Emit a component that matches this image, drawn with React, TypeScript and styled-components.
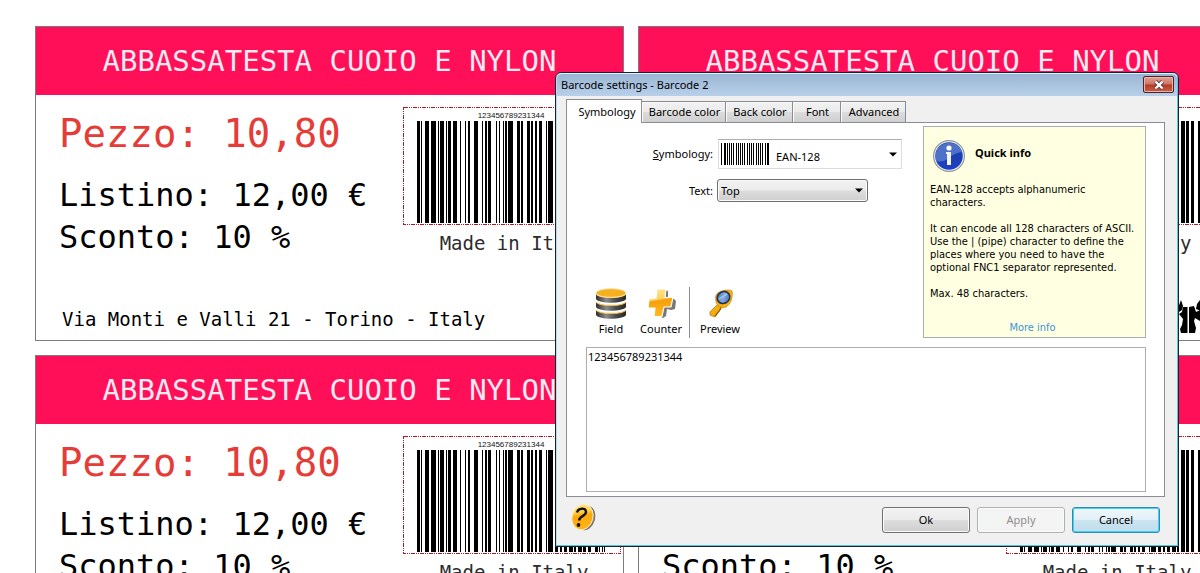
import React from "react";
import styled, { createGlobalStyle } from "styled-components";

const GlobalStyle = createGlobalStyle`
  * { box-sizing: border-box; }
  body { margin: 0; background: #fff; overflow: hidden; }
  button, select, textarea { font: inherit; color: inherit; }
`;

const mono = `"DejaVu Sans Mono", monospace`;
const ui = `"Noto Sans", "Segoe UI", sans-serif`;
const infoFont = `"DejaVu Sans Condensed", Tahoma, sans-serif`;

const Workspace = styled.main`
  position: relative;
  height: 100vh;
  overflow: hidden;
`;

const Sheet = styled.div`
  display: grid;
  grid-template-columns: repeat(2, calc(49vw + 1px));
  gap: 14px;
  padding: 26px 0 0 35px;
`;

const Label = styled.article`
  display: flex;
  flex-direction: column;
  height: 315px;
  border: 1px solid #7c7c7c;
  background: #fff;
  font-family: ${mono};
  color: #000;
  white-space: nowrap;
`;

const LabelHeader = styled.h2`
  margin: 0;
  background: #ff0f57;
  color: #ffe9f2;
  font-size: 29px;
  font-weight: 400;
  line-height: 68px;
  text-align: center;
`;

const LabelBody = styled.div`
  display: flex;
  flex: 1;
  justify-content: space-between;
  padding: 12px 2px 0 23px;
`;

const Prices = styled.div`
  display: flex;
  flex-direction: column;
`;

const Price = styled.p`
  margin: 0 0 14px;
  color: #e63c38;
  font-size: 39px;
  line-height: 53px;
`;

const Detail = styled.p`
  margin: 0;
  font-size: 32px;
  line-height: 42px;
`;

const CodeColumn = styled.div`
  display: flex;
  flex-direction: column;
  align-items: center;
`;

const Origin = styled.p`
  margin: 6px 0 0;
  padding-left: 4px;
  color: #2c2c2c;
  font-size: 19px;
  line-height: 24px;
`;

const LabelFooter = styled.footer`
  display: flex;
  justify-content: space-between;
  align-items: flex-end;
  padding: 0 2px 5px 26px;
  font-size: 19px;
  line-height: 32px;
`;

const bars: [number, number][] = [
  [0, 3], [4, 1], [8, 4], [14, 5], [21, 1], [23, 4], [29, 1], [31, 3], [36, 4], [43, 1],
  [48, 1], [51, 2], [57, 4], [65, 1], [68, 2], [71, 3], [79, 1], [82, 1], [86, 1], [88, 2],
  [91, 5], [100, 3], [104, 2], [110, 3], [114, 2], [118, 2], [122, 3], [129, 1], [131, 5],
  [138, 3], [143, 2], [147, 3], [152, 4], [157, 2], [161, 4], [166, 3], [171, 3], [178, 3],
  [182, 1], [185, 1], [187, 1],
];

const Barcode = () => (
  <svg width="218" height="118" viewBox="0 0 218 118" role="img" aria-label="Barcode 123456789231344">
    <rect
      x="0.5"
      y="0.5"
      width="217"
      height="117"
      fill="none"
      stroke="#b81424"
      strokeDasharray="4 1 1 1 1 1"
      shapeRendering="crispEdges"
    />
    <text x="108" y="11" textAnchor="middle" fontFamily="Liberation Sans, Arial, sans-serif" fontSize="8" fill="#111">
      123456789231344
    </text>
    <g fill="#000" shapeRendering="crispEdges">
      {bars.map(([x, w]) => (
        <rect key={x} x={x + 14} y="14" width={w} height="102" />
      ))}
    </g>
  </svg>
);

const Crest = () => (
  <svg width="46" height="36" viewBox="0 0 46 36" fill="#000" aria-hidden="true">
    <path d="M0 9 L3 1 L5 7 L4 11 L1 13Z" />
    <path d="M1 15 L4 13 L5 8 L9.5 8 V34 H3 L2 30 L4 26 L5 20Z" />
    <path d="M11 8 L16 7 L18 13 L24 10 L22 22 L17 19 L16 22 L18 29 L17 34 H11Z" />
    <path d="M18 10 L19 5 L22 1 L25 8 L23 12Z" />
    <path d="M26 12 L30 7 L34 11 L38 8 L42 14 L38 22 L40 34 H33 L31 25 L28 34 H24 L25 20Z" />
  </svg>
);

const PriceLabel = () => (
  <Label>
    <LabelHeader>ABBASSATESTA CUOIO E NYLON</LabelHeader>
    <LabelBody>
      <Prices>
        <Price>Pezzo: 10,80</Price>
        <Detail>Listino: 12,00 €</Detail>
        <Detail>Sconto: 10 %</Detail>
      </Prices>
      <CodeColumn>
        <Barcode />
        <Origin>Made in Italy</Origin>
      </CodeColumn>
    </LabelBody>
    <LabelFooter>
      <span>Via Monti e Valli 21 - Torino - Italy</span>
      <Crest />
    </LabelFooter>
  </Label>
);

const Dialog = styled.section`
  position: absolute;
  top: 72px;
  right: 21px;
  width: 52vw;
  min-width: 620px;
  border: 1px solid #16222c;
  border-radius: 6px 6px 1px 1px;
  background: #f0f0f0;
  font-family: ${ui};
  font-size: 11px;
  line-height: 16px;
  color: #000;
  box-shadow: inset -1px -1px 0 #58c4e0, inset 1px 1px 0 #b9dbee;
  overflow: hidden;
`;

const TitleBar = styled.header`
  display: flex;
  justify-content: space-between;
  align-items: flex-start;
  height: 23px;
  margin: 0 1px;
  padding: 2px 3px 0 4px;
  border-top: 1px solid #e4f1fb;
  border-radius: 5px 5px 0 0;
  background: linear-gradient(#9ab5d3, #b8d0ea);
`;

const Title = styled.h1`
  margin: 0;
  font-size: 11px;
  font-weight: 400;
  line-height: 18px;
`;

const CloseButton = styled.button`
  display: flex;
  align-items: center;
  justify-content: center;
  width: 31px;
  height: 17px;
  padding: 0;
  border: 1px solid #4b2329;
  border-radius: 2px;
  background: linear-gradient(#dfa096 0%, #cf7565 48%, #b33a22 52%, #cb6149 100%);
  box-shadow: inset 0 0 0 1px #e9b5aa;
`;

const DialogBody = styled.div`
  padding: 3px 13px 12px 10px;
`;

const Tabs = styled.div`
  display: flex;
  align-items: flex-end;
`;

const Tab = styled.button<{ $active?: boolean; $width: number }>`
  position: relative;
  width: ${(p) => p.$width}px;
  height: ${(p) => (p.$active ? 24 : 21)}px;
  margin-bottom: ${(p) => (p.$active ? -1 : 0)}px;
  padding: 0 0 0 ${(p) => (p.$active ? 6 : 2)}px;
  border: 1px solid #898c95;
  border-left-width: ${(p) => (p.$active ? 1 : 0)}px;
  border-bottom: 0;
  background: ${(p) => (p.$active ? "#fff" : "linear-gradient(#f2f2f2 0%, #ebebeb 48%, #dcdcdc 52%, #cfcfcf 100%)")};
  box-shadow: ${(p) => (p.$active ? "none" : "inset 1px 1px 0 #fbfbfb")};
  white-space: nowrap;
`;

const Panel = styled.div`
  padding: 3px 18px 4px 19px;
  border: 1px solid #898c95;
  background: #fff;
`;

const PanelTop = styled.div`
  display: flex;
  justify-content: space-between;
`;

const Controls = styled.div`
  display: flex;
  flex-direction: column;
  justify-content: space-between;
  padding-top: 13px;
`;

const Form = styled.div`
  display: grid;
  grid-template-columns: 127px auto;
  align-items: center;
  justify-items: start;
  gap: 10px 4px;
`;

const FieldLabel = styled.label`
  justify-self: end;
`;

const SymbologyBox = styled.div`
  display: flex;
  align-items: center;
  width: 184px;
  height: 30px;
  padding: 0 4px 0 1px;
  margin-left: 1px;
  border: 1px solid #dcdcdc;
  border-top-color: #abadb3;
  background: #fff;
`;

const PlainSelect = styled.select`
  flex: 1;
  min-width: 0;
  height: 24px;
  padding: 5px 0 0 6px;
  border: 0;
  outline: 0;
  appearance: none;
  background: transparent;
`;

const TextBox = styled.div`
  display: flex;
  align-items: center;
  width: 151px;
  height: 23px;
  padding-right: 4px;
  border: 1px solid #707070;
  border-radius: 3px;
  background: linear-gradient(#f2f2f2 0%, #ebebeb 48%, #dddddd 52%, #cfcfcf 100%);
  box-shadow: inset 0 0 0 1px #fafafa;
`;

const ButtonSelect = styled.select`
  flex: 1;
  height: 20px;
  padding: 0 3px;
  border: 0;
  outline: 0;
  appearance: none;
  background: transparent;
`;

const Arrow = () => (
  <svg width="8" height="5" viewBox="0 0 8 5" aria-hidden="true">
    <path d="M0 0.5 H8 L4 4.5Z" fill="#000" />
  </svg>
);

const SymbologyIcon = () => (
  <svg width="50" height="22" viewBox="0 0 50 22" shapeRendering="crispEdges" aria-hidden="true">
    <rect x="1" width="1" height="22" />
    <rect x="4" width="2" height="22" />
    {[7, 9, 11, 13, 16, 18, 20, 22, 24, 27, 29, 31, 33, 36, 38, 40, 42, 45].map((x) => (
      <rect key={x} x={x} width="1" height="22" />
    ))}
    <rect x="47" width="2" height="22" />
  </svg>
);

const Tools = styled.div`
  display: flex;
`;

const Tool = styled.button<{ $width: number }>`
  display: flex;
  flex-direction: column;
  align-items: center;
  gap: 1px;
  width: ${(p) => p.$width}px;
  height: 51px;
  padding: 1px 0 0;
  border: 0;
  background: transparent;
`;

const Divider = styled.div`
  width: 1px;
  height: 51px;
  margin-left: 3px;
  background: #8b8b8b;
`;

const FieldIcon = () => (
  <svg width="32" height="32" viewBox="0 0 32 32" aria-hidden="true">
    <defs>
      <linearGradient id="disk" x1="0" x2="1">
        <stop offset="0" stopColor="#303030" />
        <stop offset="0.35" stopColor="#8b8b8b" />
        <stop offset="0.65" stopColor="#4c4c4c" />
        <stop offset="1" stopColor="#262626" />
      </linearGradient>
    </defs>
    {[22, 14, 6].map((y) => (
      <g key={y}>
        <path
          d={`M1 ${y} C4 ${y + 4.5} 28 ${y + 4.5} 31 ${y} V${y + 5} C28 ${y + 10} 4 ${y + 10} 1 ${y + 5}Z`}
          fill="url(#disk)"
        />
        <path d={`M1 ${y} C4 ${y + 4.5} 28 ${y + 4.5} 31 ${y}`} fill="none" stroke="#f6c04a" strokeWidth="1.2" />
      </g>
    ))}
    <ellipse cx="16" cy="5" rx="15" ry="4.3" fill="#f5b020" stroke="#fbe4a6" strokeWidth="1" />
  </svg>
);

const CounterIcon = () => (
  <svg width="32" height="32" viewBox="0 0 32 32" aria-hidden="true">
    <defs>
      <linearGradient id="plus" x1="0" y1="0" x2="0.15" y2="1">
        <stop offset="0" stopColor="#ffe48c" />
        <stop offset="0.42" stopColor="#fdd565" />
        <stop offset="0.48" stopColor="#f79f0b" />
        <stop offset="1" stopColor="#ffb920" />
      </linearGradient>
    </defs>
    <path
      d="M20 2 L23 3 L23 9 L29 11 L31 13 L30 21 L26 22 L22 21 L21 28 L18 30 L14 28 L18 18 L26 17 L27 10 L20 9Z"
      fill="#77777b"
    />
    <path
      d="M12 1 H21 L20 9.5 L28 9 L26 19 L19 19 L17 28.500 H9 L10 20 L3 20 L4 11 L11 10Z"
      fill="url(#plus)"
      stroke="#fff"
      strokeWidth="1.2"
      strokeLinejoin="round"
    />
  </svg>
);

const PreviewIcon = () => (
  <svg width="32" height="32" viewBox="0 0 32 32" aria-hidden="true">
    <defs>
      <linearGradient id="lens" x1="0" y1="0" x2="1" y2="1">
        <stop offset="0" stopColor="#2f68b4" />
        <stop offset="0.5" stopColor="#86abe0" />
        <stop offset="1" stopColor="#31609f" />
      </linearGradient>
    </defs>
    <path d="M14 16 L6 24 L6 27 L11 29 L18 19Z" fill="#f6ad0d" stroke="#bf7b05" strokeWidth="0.8" />
    <path d="M17 19 L16 22 L11 28" fill="none" stroke="#8b611a" strokeWidth="1.2" />
    <path d="M12 7 C15 2 25 1 28 3 C29 9 27 16 22 19 C16 21 10 17 12 7Z" fill="#f9b213" stroke="#d38c0a" strokeWidth="0.8" />
    <ellipse cx="19.5" cy="9.500" rx="6.5" ry="5.8" transform="rotate(-30 19.5 9.5)" fill="url(#lens)" stroke="#23334f" strokeWidth="1.6" />
    <path d="M15 11 L23 6" stroke="#b6ccee" strokeWidth="1.2" />
  </svg>
);

const InfoBox = styled.aside`
  display: flex;
  flex-direction: column;
  width: 223px;
  height: 212px;
  padding: 12px 6px 3px;
  border: 1px solid #abadb3;
  background: #ffffe1;
  font-family: ${infoFont};
  font-size: 11px;
  line-height: 13px;
`;

const InfoHeader = styled.div`
  display: flex;
  gap: 9px;
  padding-left: 2px;
  margin-bottom: 10px;
`;

const InfoTitle = styled.h2`
  margin: 0;
  font-family: ${ui};
  font-size: 11px;
  line-height: 28px;
`;

const InfoText = styled.p`
  margin: 0 0 13px;
  white-space: nowrap;
`;

const MoreInfo = styled.a`
  align-self: center;
  margin-top: auto;
  padding-right: 4px;
  color: #3c94d8;
  text-decoration: none;
`;

const InfoIcon = () => (
  <svg width="34" height="34" viewBox="0 0 34 34" aria-hidden="true">
    <defs>
      <linearGradient id="info" x1="0" y1="0" x2="0" y2="1">
        <stop offset="0" stopColor="#1c3f9e" />
        <stop offset="1" stopColor="#1d3fc4" />
      </linearGradient>
    </defs>
    <circle cx="17" cy="17" r="15.4" fill="#eef1f8" stroke="#8f959f" strokeWidth="1.2" />
    <circle cx="17" cy="17" r="13.8" fill="url(#info)" />
    <path d="M3.5 18 A13.6 13.6 0 0 1 30 13 Q22 14 17 19 Q10 24 4.500 22Z" fill="#6f92dc" opacity="0.6" />
    <circle cx="17" cy="9" r="2.6" fill="#fff" />
    <path d="M14 13 H19 V26 H15 V15 H14Z" fill="#f2f4fb" />
  </svg>
);

const CodeInput = styled.textarea`
  display: block;
  width: 100%;
  height: 145px;
  margin-top: 9px;
  padding: 1px;
  border: 1px solid #abadb3;
  outline: 0;
  resize: none;
  background: #fff;
`;

const Actions = styled.footer`
  display: flex;
  align-items: center;
  gap: 7px;
  padding: 6px 5px 0 4px;
`;

const HelpButton = styled.button`
  display: flex;
  width: 28px;
  height: 31px;
  margin-right: auto;
  padding: 0;
  border: 0;
  background: transparent;
`;

const ActionButton = styled.button<{ $focused?: boolean }>`
  width: 88px;
  height: 26px;
  margin-top: 3px;
  padding: 0;
  border: 1px solid ${(p) => (p.$focused ? "#2c8cb8" : "#707070")};
  border-radius: 3px;
  background: ${(p) =>
    p.$focused
      ? "linear-gradient(#eef7fb 0%, #e2f0f8 48%, #cbe4f1 52%, #c0dcea 100%)"
      : "linear-gradient(#f2f2f2 0%, #ebebeb 48%, #dddddd 52%, #cfcfcf 100%)"};
  box-shadow: inset 0 0 0 1px ${(p) => (p.$focused ? "#43d0f6" : "#fafafa")};

  &:disabled {
    border-color: #adb2b5;
    background: #f4f4f4;
    color: #8d8d8d;
  }
`;

const HelpIcon = () => (
  <svg width="26" height="30" viewBox="0 0 26 30" aria-hidden="true">
    <defs>
      <linearGradient id="help" x1="0" y1="0" x2="0.4" y2="1">
        <stop offset="0" stopColor="#fff0b0" />
        <stop offset="0.4" stopColor="#ffd24d" />
        <stop offset="0.55" stopColor="#f9a810" />
        <stop offset="1" stopColor="#ffb414" />
      </linearGradient>
    </defs>
    <ellipse cx="16" cy="15" rx="9" ry="12.5" transform="rotate(16 16 15)" fill="#77736e" />
    <ellipse cx="12.5" cy="14" rx="10.5" ry="13" transform="rotate(16 12.5 14)" fill="url(#help)" stroke="#fff1cd" strokeWidth="0.9" />
    <path d="M7 9.500 C8 5 16 4 16 9 C16 13 9.5 13 9 17.5" fill="none" stroke="#151006" strokeWidth="2.4" />
    <circle cx="8.500" cy="22" r="1.9" fill="#151006" />
  </svg>
);

const AccessKey = styled.span`
  text-decoration: underline;
`;

export default function App() {
  return (
    <>
      <GlobalStyle />
      <Workspace>
        <Sheet>
          <PriceLabel />
          <PriceLabel />
          <PriceLabel />
          <PriceLabel />
        </Sheet>

        <Dialog role="dialog" aria-labelledby="dialog-title">
          <TitleBar>
            <Title id="dialog-title">Barcode settings - Barcode 2</Title>
            <CloseButton aria-label="Close">
              <svg width="12" height="10" viewBox="0 0 12 10" aria-hidden="true">
                <path d="M2.5 1.5 L9.5 8.5 M9.5 1.5 L2.5 8.5" stroke="#5a3a3a" strokeWidth="4" />
                <path d="M2.5 1.5 L9.5 8.5 M9.5 1.5 L2.5 8.5" stroke="#fff" strokeWidth="2.4" />
              </svg>
            </CloseButton>
          </TitleBar>
          <DialogBody>
            <Tabs role="tablist">
              <Tab role="tab" aria-selected $active $width={76}>Symbology</Tab>
              <Tab role="tab" $width={84}>Barcode color</Tab>
              <Tab role="tab" $width={67}>Back color</Tab>
              <Tab role="tab" $width={48}>Font</Tab>
              <Tab role="tab" $width={65}>Advanced</Tab>
            </Tabs>
            <Panel role="tabpanel">
              <PanelTop>
                <Controls>
                  <Form>
                    <FieldLabel htmlFor="symbology"><AccessKey>S</AccessKey>ymbology:</FieldLabel>
                    <SymbologyBox>
                      <SymbologyIcon />
                      <PlainSelect id="symbology"><option>EAN-128</option></PlainSelect>
                      <Arrow />
                    </SymbologyBox>
                    <FieldLabel htmlFor="text-position">Text:</FieldLabel>
                    <TextBox>
                      <ButtonSelect id="text-position"><option>Top</option></ButtonSelect>
                      <Arrow />
                    </TextBox>
                  </Form>
                  <Tools>
                    <Tool $width={50}><FieldIcon />Field</Tool>
                    <Tool $width={50}><CounterIcon />Counter</Tool>
                    <Divider />
                    <Tool $width={60}><PreviewIcon />Preview</Tool>
                  </Tools>
                </Controls>
                <InfoBox>
                  <InfoHeader>
                    <InfoIcon />
                    <InfoTitle>Quick info</InfoTitle>
                  </InfoHeader>
                  <InfoText>EAN-128 accepts alphanumeric<br />characters.</InfoText>
                  <InfoText>
                    It can encode all 128 characters of ASCII.<br />
                    Use the | (pipe) character to define the<br />
                    places where you need to have the<br />
                    optional FNC1 separator represented.
                  </InfoText>
                  <InfoText>Max. 48 characters.</InfoText>
                  <MoreInfo href="#more">More info</MoreInfo>
                </InfoBox>
              </PanelTop>
              <CodeInput aria-label="Barcode value" defaultValue="123456789231344" />
            </Panel>
            <Actions>
              <HelpButton aria-label="Help"><HelpIcon /></HelpButton>
              <ActionButton>Ok</ActionButton>
              <ActionButton disabled>Apply</ActionButton>
              <ActionButton $focused>Cancel</ActionButton>
            </Actions>
          </DialogBody>
        </Dialog>
      </Workspace>
    </>
  );
}
